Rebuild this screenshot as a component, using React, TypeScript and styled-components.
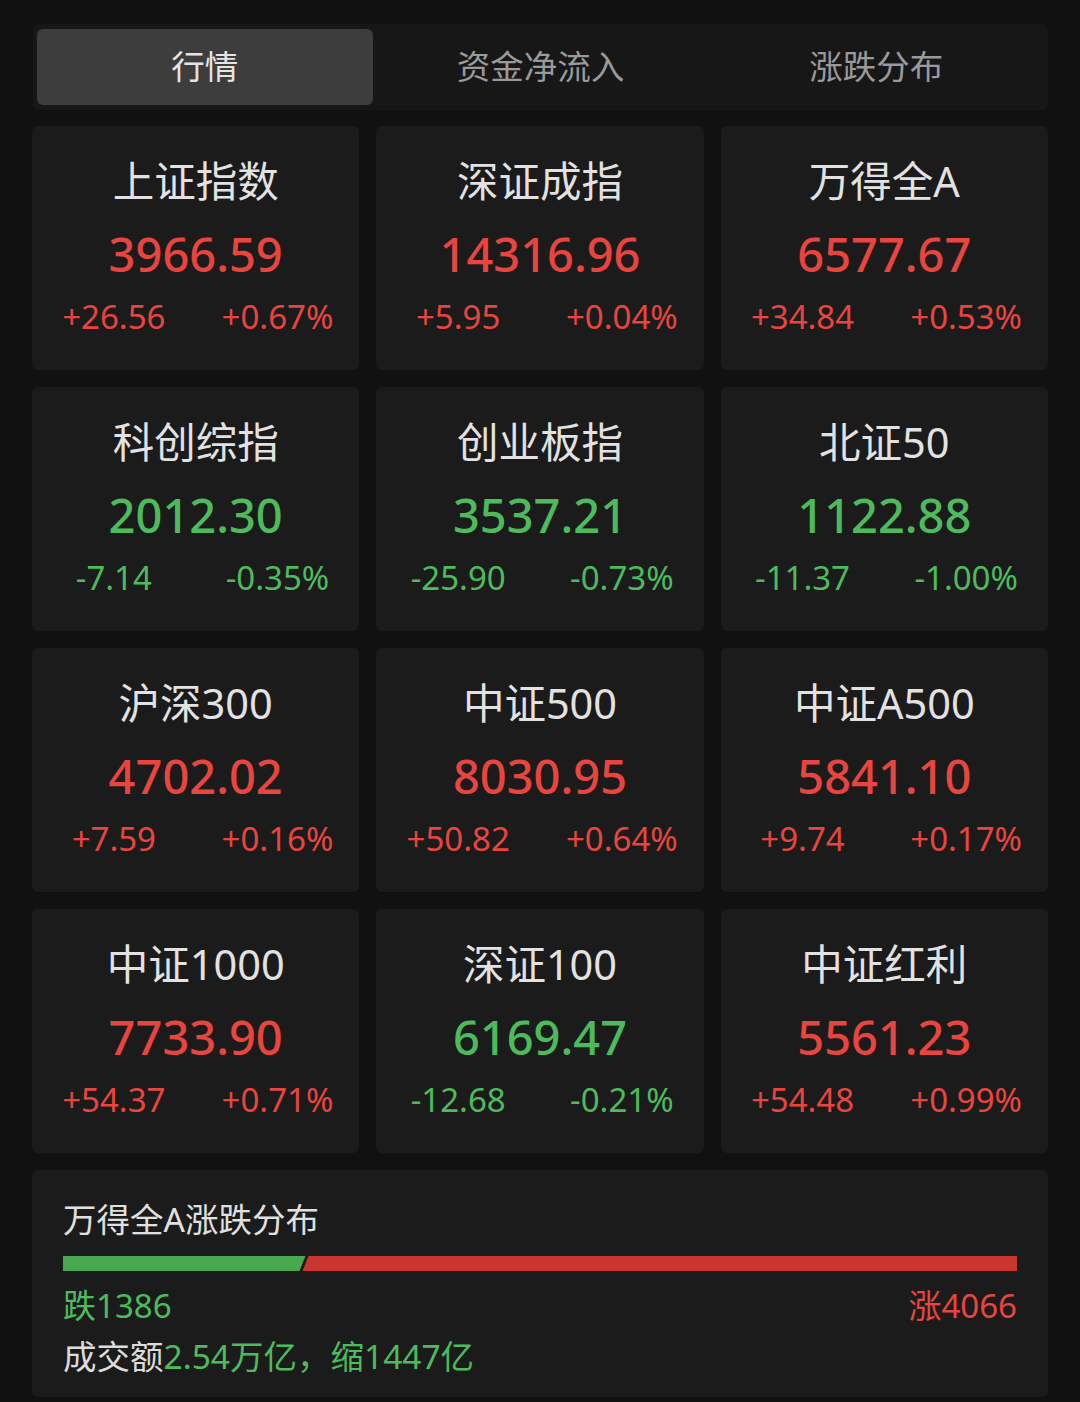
import styled, { createGlobalStyle } from "styled-components";

const GlobalStyle = createGlobalStyle`
  body {
    margin: 0;
    background: #111111;
    font-family: "Noto Sans", "Noto Sans CJK SC", sans-serif;
  }
`;

const RED = "#e8453f";
const GREEN = "#4dbb5b";

type Quote = {
  name: string;
  value: string;
  change: string;
  pct: string;
  up: boolean;
};

const quotes: Quote[] = [
  { name: "上证指数", value: "3966.59", change: "+26.56", pct: "+0.67%", up: true },
  { name: "深证成指", value: "14316.96", change: "+5.95", pct: "+0.04%", up: true },
  { name: "万得全A", value: "6577.67", change: "+34.84", pct: "+0.53%", up: true },
  { name: "科创综指", value: "2012.30", change: "-7.14", pct: "-0.35%", up: false },
  { name: "创业板指", value: "3537.21", change: "-25.90", pct: "-0.73%", up: false },
  { name: "北证50", value: "1122.88", change: "-11.37", pct: "-1.00%", up: false },
  { name: "沪深300", value: "4702.02", change: "+7.59", pct: "+0.16%", up: true },
  { name: "中证500", value: "8030.95", change: "+50.82", pct: "+0.64%", up: true },
  { name: "中证A500", value: "5841.10", change: "+9.74", pct: "+0.17%", up: true },
  { name: "中证1000", value: "7733.90", change: "+54.37", pct: "+0.71%", up: true },
  { name: "深证100", value: "6169.47", change: "-12.68", pct: "-0.21%", up: false },
  { name: "中证红利", value: "5561.23", change: "+54.48", pct: "+0.99%", up: true },
];

const tabs = ["行情", "资金净流入", "涨跌分布"];

const Page = styled.div`
  padding: 24px 32px 6px 32px;
`;

const TabBar = styled.div`
  display: grid;
  grid-template-columns: repeat(3, 1fr);
  padding: 5px 4px;
  background: #171717;
  border-radius: 6px;
  margin-left: 1px;
`;

const Tab = styled.div<{ $active?: boolean }>`
  height: 76px;
  box-sizing: border-box;
  padding-bottom: 5px;
  display: flex;
  align-items: center;
  justify-content: center;
  border-radius: 6px;
  font-size: 33.5px;
  background: ${(p) => (p.$active ? "#3d3d3d" : "transparent")};
  color: ${(p) => (p.$active ? "#e4e4e4" : "#9a9a9a")};
`;

const Grid = styled.div`
  margin-top: 16px;
  display: grid;
  grid-template-columns: repeat(3, 1fr);
  gap: 17px;
`;

const Card = styled.div`
  height: 244px;
  box-sizing: border-box;
  padding-top: 30px;
  background: #1b1b1b;
  border-radius: 6px;
  display: flex;
  flex-direction: column;
  align-items: center;
`;

const Name = styled.div`
  font-size: 41.5px;
  line-height: 50px;
  color: #e2e2e2;
`;

const Value = styled.div<{ $up: boolean }>`
  margin-top: 16px;
  font-size: 47px;
  line-height: 64px;
  font-weight: 500;
  color: ${(p) => (p.$up ? RED : GREEN)};
`;

const Changes = styled.div<{ $up: boolean }>`
  margin-top: 11px;
  width: 100%;
  display: grid;
  grid-template-columns: 1fr 1fr;
  font-size: 33px;
  line-height: 40px;
  text-align: center;
  color: ${(p) => (p.$up ? RED : GREEN)};
`;

const Panel = styled.div`
  margin-top: 17px;
  background: #1b1b1b;
  border-radius: 6px;
  padding: 29px 31px 21px 31px;
`;

const PanelTitle = styled.div`
  font-size: 33.5px;
  line-height: 40px;
  color: #e0e0e0;
`;

const Bar = styled.div`
  margin-top: 17px;
  height: 15px;
  display: flex;
`;

const FallPart = styled.div`
  height: 100%;
  background: #47a850;
  clip-path: polygon(0 0, 100% 0, calc(100% - 6px) 100%, 0 100%);
`;

const RisePart = styled.div`
  flex: 1;
  height: 100%;
  margin-left: -3px;
  background: #c9362f;
  clip-path: polygon(6px 0, 100% 0, 100% 100%, 0 100%);
`;

const Counts = styled.div`
  margin-top: 15px;
  display: flex;
  justify-content: space-between;
  font-size: 33px;
  line-height: 40px;
`;

const Count = styled.span<{ $up: boolean }>`
  color: ${(p) => (p.$up ? RED : GREEN)};
`;

const Turnover = styled.div`
  margin-top: 10px;
  font-size: 33.5px;
  line-height: 40px;
  color: #dcdcdc;
`;

const Green = styled.span`
  color: ${GREEN};
`;

export default function App() {
  const fall = 1386;
  const rise = 4066;
  const fallPct = (fall / (fall + rise)) * 100;

  return (
    <>
      <GlobalStyle />
      <Page>
        <TabBar>
          {tabs.map((t, i) => (
            <Tab key={t} $active={i === 0}>
              {t}
            </Tab>
          ))}
        </TabBar>
        <Grid>
          {quotes.map((q) => (
            <Card key={q.name}>
              <Name>{q.name}</Name>
              <Value $up={q.up}>{q.value}</Value>
              <Changes $up={q.up}>
                <span>{q.change}</span>
                <span>{q.pct}</span>
              </Changes>
            </Card>
          ))}
        </Grid>
        <Panel>
          <PanelTitle>万得全A涨跌分布</PanelTitle>
          <Bar>
            <FallPart style={{ width: `${fallPct}%` }} />
            <RisePart />
          </Bar>
          <Counts>
            <Count $up={false}>跌{fall}</Count>
            <Count $up={true}>涨{rise}</Count>
          </Counts>
          <Turnover>
            成交额<Green>2.54万亿，缩1447亿</Green>
          </Turnover>
        </Panel>
      </Page>
    </>
  );
}
